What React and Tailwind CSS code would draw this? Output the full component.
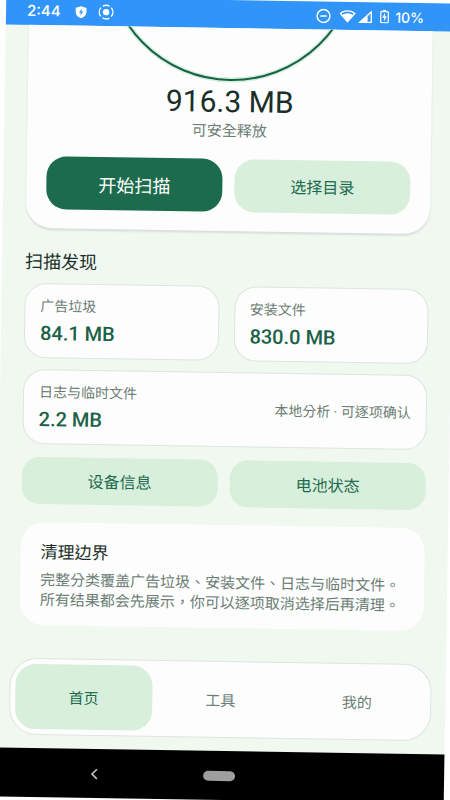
import React from "react";

const found = [
  { label: "广告垃圾", size: "84.1 MB" },
  { label: "安装文件", size: "830.0 MB" },
];

const tabs = ["首页", "工具", "我的"];

export default function App() {
  return (
    <div className="min-h-screen overflow-hidden bg-[#fdfefd]">
      <div className="flex min-h-screen rotate-[0.9deg] flex-col bg-[#f0f8f0] font-[Roboto,'Noto_Sans_CJK_TC',sans-serif] text-[#1a2f29]">
        <StatusBar />
        <main className="px-[23px]">
          <SummaryCard />
          <h2 className="mt-5 text-[18px] leading-7">扫描发现</h2>
          <div className="mt-[7px] grid grid-cols-2 gap-x-[15px] gap-y-[11px]">
            {found.map((item) => (
              <FoundCard key={item.label} {...item} />
            ))}
            <div className="col-span-2">
              <FoundCard label="日志与临时文件" size="2.2 MB" note="本地分析 · 可逐项确认" />
            </div>
          </div>
          <div className="mt-[13px] grid grid-cols-2 gap-3">
            <button className="h-[47px] rounded-[18px] bg-[#d8efdc] pt-[3px] text-[16px] text-[#1c6b4d]">设备信息</button>
            <button className="h-[47px] rounded-[18px] bg-[#d8efdc] pt-[3px] text-[16px] text-[#1c6b4d]">电池状态</button>
          </div>
          <section className="mt-[18px] rounded-[24px] bg-[#fdfdfd] px-5 pt-[18px] pb-[15px]">
            <h3 className="text-[17px] leading-6">清理边界</h3>
            <p className="mt-[6px] text-[15px] leading-5 text-[#6c7d75]">
              完整分类覆盖广告垃圾、安装文件、日志与临时文件。所有结果都会先展示，你可以逐项取消选择后再清理。
            </p>
          </section>
        </main>
        <TabBar />
        <SystemNav />
      </div>
    </div>
  );
}

function StatusBar() {
  return (
    <header className="flex h-7 items-center bg-[#3194f8] pr-8 pl-[21px] font-[Inter,sans-serif] text-[15px] font-medium text-white">
      <span>2:44</span>
      <svg className="ml-[15px] h-[13px] w-3" viewBox="0 0 12 13">
        <path d="M6 0.5 L11.4 2.2 V6.3 C11.4 9.3 9.2 11.6 6 12.6 C2.8 11.6 0.6 9.3 0.6 6.3 V2.2 Z" fill="#fff" />
        <path d="M6.8 2.8 L3.9 6.9 H5.7 L5.2 10 L8.2 5.8 H6.4 Z" fill="#3194f8" />
      </svg>
      <svg className="ml-[11px] h-4 w-4" viewBox="0 0 16 16" fill="none" stroke="#fff" strokeWidth="1.4">
        <circle cx="8" cy="8" r="3.2" fill="#fff" stroke="none" />
        <path d="M4.6 2.1 A6.8 6.8 0 0 1 11.4 2.1 M13.2 3.6 A6.8 6.8 0 0 1 13.2 12.4 M11.4 13.9 A6.8 6.8 0 0 1 4.6 13.9 M2.8 12.4 A6.8 6.8 0 0 1 2.8 3.6" />
      </svg>
      <svg className="ml-auto h-[15px] w-[15px]" viewBox="0 0 15 15" fill="none" stroke="#fff" strokeWidth="1.5">
        <circle cx="7.5" cy="7.5" r="6.4" />
        <path d="M4.3 7.5 H10.7" />
      </svg>
      <svg className="ml-2 h-[13px] w-[17px]" viewBox="0 0 17 13">
        <path d="M0.3 3.4 C5 -0.7 12 -0.7 16.7 3.4 L8.5 12.8 Z" fill="#fff" />
        <path d="M2.3 3.8 C6 1 11 1 14.7 3.8 L13.8 4.9 C10.4 2.7 6.6 2.7 3.2 4.9 Z" fill="#3194f8" />
      </svg>
      <svg className="ml-[2px] h-[13px] w-[14px]" viewBox="0 0 14 13">
        <path d="M0 13 L14 0 V13 Z" fill="#fff" />
        <path d="M9.6 6 L12.6 3.2 V11.6 H9.6 Z" fill="#3194f8" />
      </svg>
      <svg className="ml-2 h-[14px] w-[9px]" viewBox="0 0 9 14">
        <path d="M3 0.3 H6 V1.8 H3 Z" fill="#fff" />
        <rect x="0.7" y="2.1" width="7.6" height="11.2" rx="1" fill="none" stroke="#fff" strokeWidth="1.3" />
        <path d="M5 3.5 L2.2 8.2 H4 V11.8 L6.8 7 H5 Z" fill="#fff" />
      </svg>
      <span className="ml-[6px] text-[14px]">10%</span>
    </header>
  );
}

function SummaryCard() {
  return (
    <section className="rounded-b-[26px] bg-[#fdfdfd] px-5 pb-[19px] text-center shadow-[0_2px_2px_rgba(60,50,70,0.13)]">
      <svg className="mx-auto block h-14 w-[260px]" viewBox="0 0 260 56" fill="none">
        <circle cx="130" cy="-73" r="125" stroke="#d3f0dc" strokeWidth="5" />
        <circle cx="130" cy="-73" r="125" stroke="#1b6148" strokeWidth="2" />
      </svg>
      <div className="text-[30px] leading-9">916.3 MB</div>
      <div className="text-[15px] leading-[22px] text-[#6c7d75]">可安全释放</div>
      <div className="mt-[17px] grid grid-cols-2 gap-3">
        <button className="h-[53px] rounded-[20px] bg-[#1c6b4d] pt-[3px] text-[18px] text-white">开始扫描</button>
        <button className="h-[53px] rounded-[20px] bg-[#d8efdc] pt-[3px] text-[16px] text-[#1c6b4d]">选择目录</button>
      </div>
    </section>
  );
}

function FoundCard({ label, size, note }) {
  return (
    <div className="flex items-center justify-between rounded-[22px] border border-[#dce6df] bg-[#fdfdfd] px-[15px] pt-3 pb-[10px]">
      <div>
        <div className="text-[14px] leading-5 text-[#6c7d75]">{label}</div>
        <div className="mt-[3px] text-[20px] leading-7 font-medium text-[#1b6148]">{size}</div>
      </div>
      {note && <div className="text-[14px] text-[#6c7d75]">{note}</div>}
    </div>
  );
}

function TabBar() {
  return (
    <nav className="mx-[14px] mt-auto mb-[13px] grid grid-cols-3 rounded-[28px] border border-[#dce6df] bg-[#fdfdfd] p-[5px] text-[15px]">
      {tabs.map((tab, i) => (
        <button
          key={tab}
          className={i === 0 ? "h-[65px] rounded-[20px] bg-[#d8efdc] pt-[3px] text-[#1c6b4d]" : "h-[65px] rounded-[20px] pt-[3px] text-[#6c7d75]"}
        >
          {tab}
        </button>
      ))}
    </nav>
  );
}

function SystemNav() {
  return (
    <footer className="flex h-[49px] justify-center bg-black">
      <button aria-label="返回" className="flex w-[125px] items-center justify-center">
        <svg className="h-3 w-2" viewBox="0 0 8 12" fill="none" stroke="#c4c4c4" strokeWidth="1.6">
          <path d="M6.8 1.2 L1.8 6 L6.8 10.8" />
        </svg>
      </button>
      <button aria-label="主屏幕" className="flex w-[125px] items-center justify-center">
        <span className="h-[10px] w-8 rounded-full bg-[#9e9e9e]" />
      </button>
      <div className="w-[125px]" />
    </footer>
  );
}
